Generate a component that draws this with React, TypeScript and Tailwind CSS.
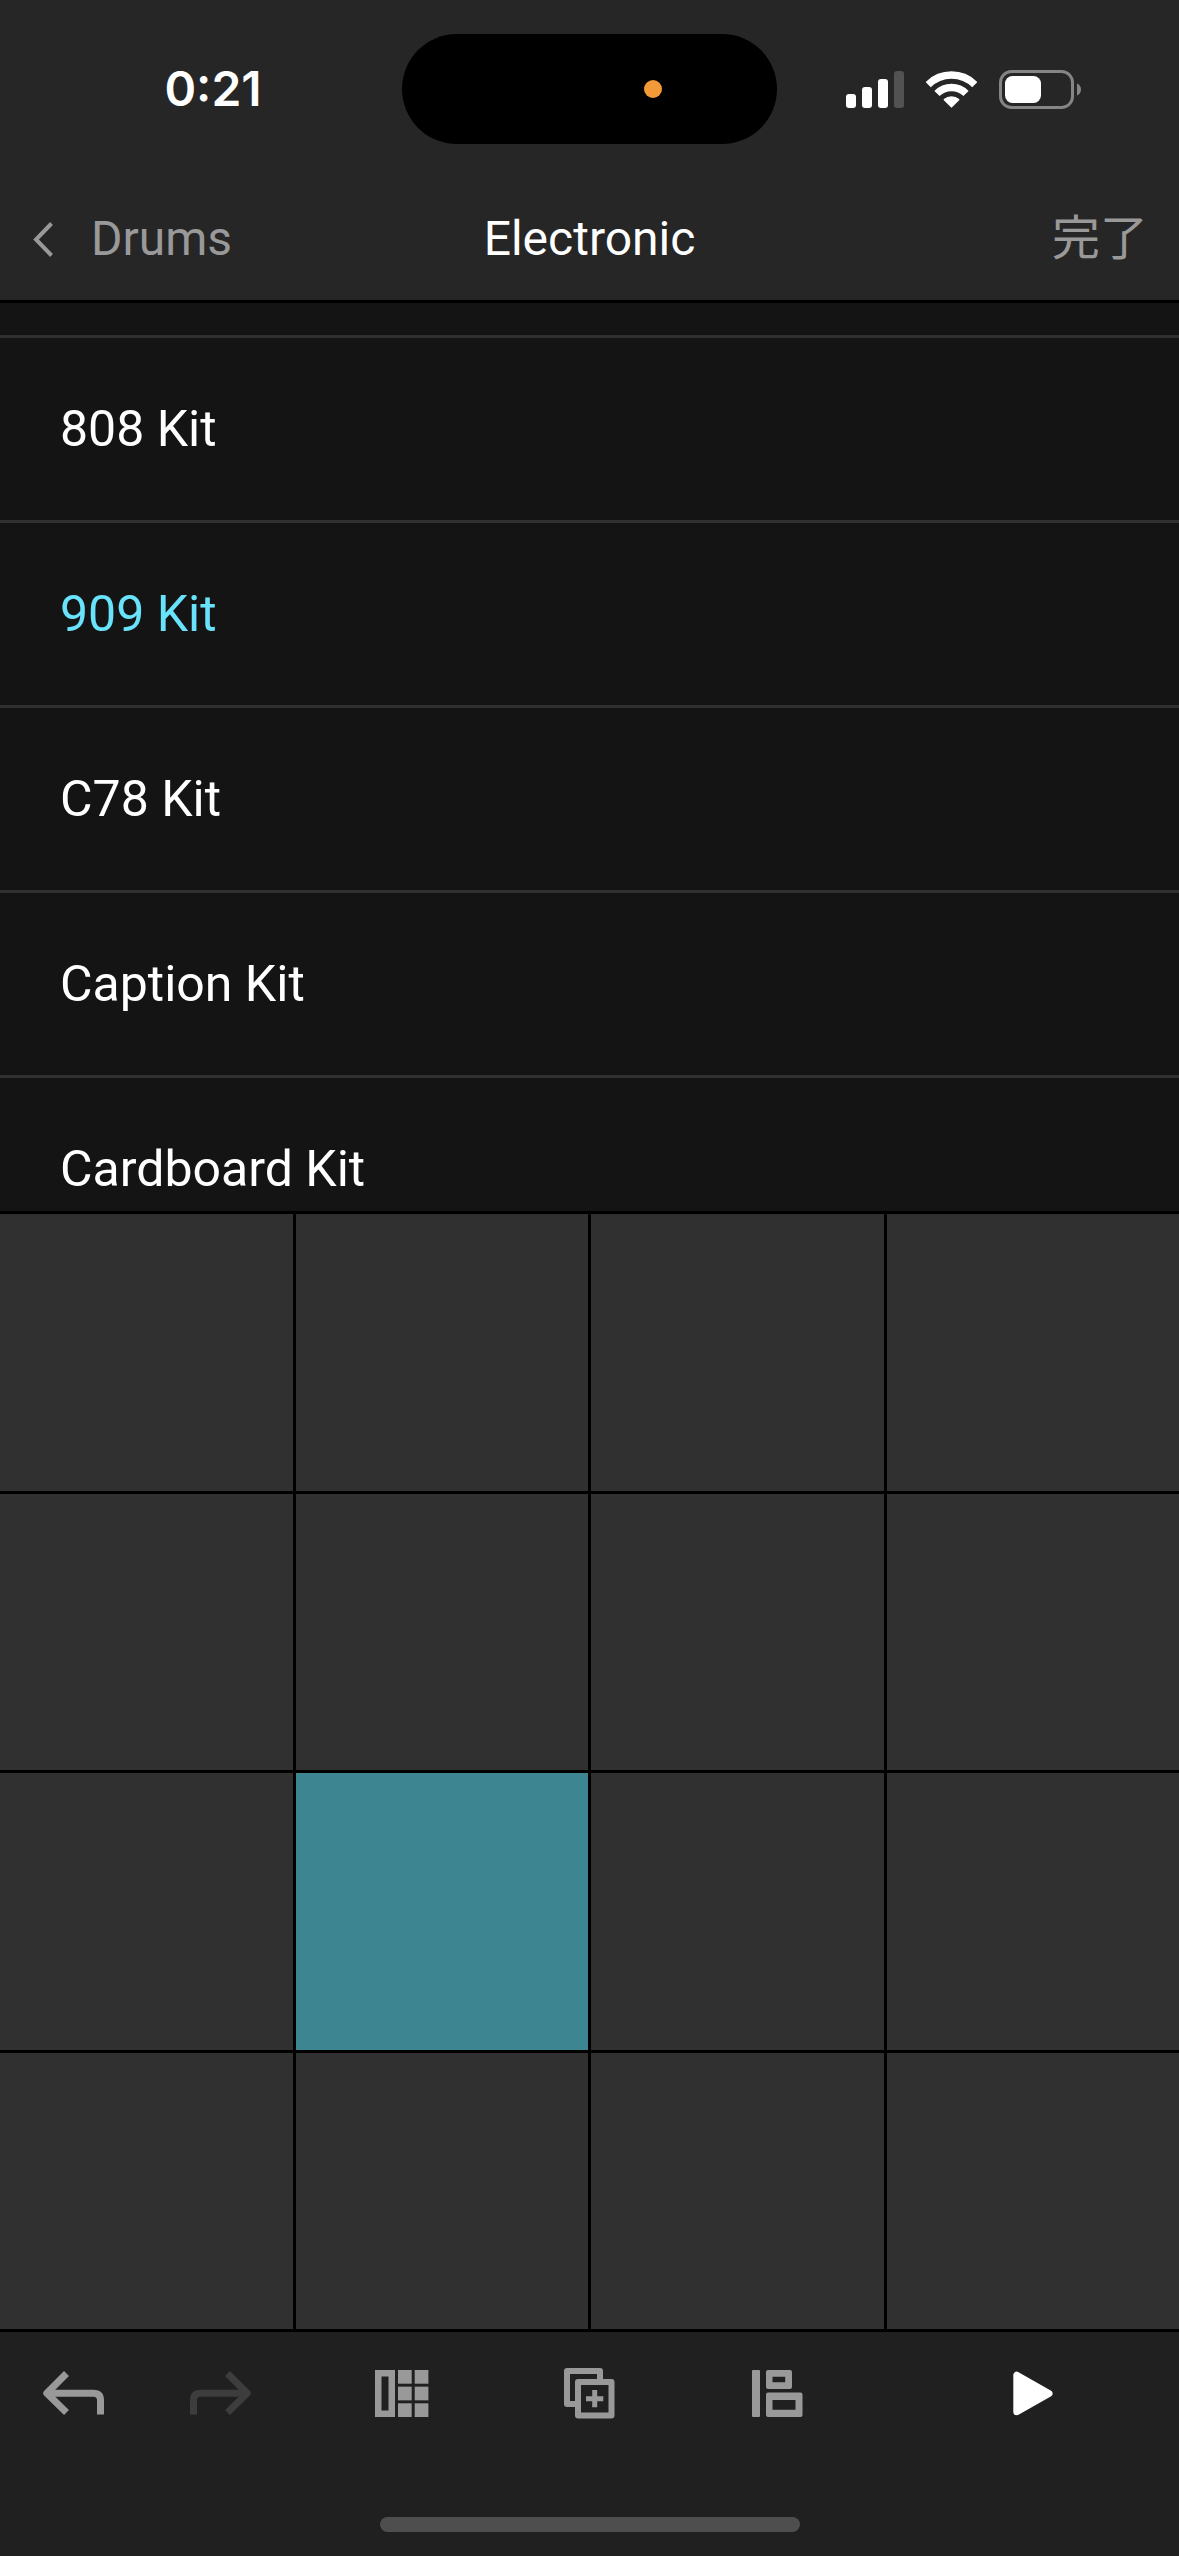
import { useState } from 'react';
import type { ReactNode } from 'react';
import clsx from 'clsx';

const kits = ['808 Kit', '909 Kit', 'C78 Kit', 'Caption Kit', 'Cardboard Kit'];
const pads = Array.from({ length: 16 }, (_, i) => i);

function StatusBar() {
  return (
    <div className="grid grid-cols-[1fr_375px_1fr] items-center h-[178px]">
      <div className="pl-6 text-center font-['Inter',sans-serif] text-5xl font-semibold text-white">
        0:21
      </div>

      <div className="flex items-center justify-end h-[110px] pr-[115px] rounded-full bg-black">
        <span className="size-[18px] rounded-full bg-[#f19a37]" />
      </div>

      <div className="flex items-center justify-end gap-[22px] pr-[98px]">
        {/* Signal */}
        <svg className="w-[58px] h-[37px]" viewBox="0 0 58 37" fill="#fff" aria-hidden="true">
          <rect x="0" y="23" width="10" height="14" rx="3" />
          <rect x="16" y="16" width="10" height="21" rx="3" />
          <rect x="32" y="8" width="10" height="29" rx="3" />
          <rect x="48" y="0" width="10" height="37" rx="3" fill="#525252" />
        </svg>
        {/* Wi-Fi */}
        <svg className="w-[51px] h-[37px]" viewBox="0 0 51 37" fill="none" stroke="#fff" strokeWidth="7.4" aria-hidden="true">
          <path d="M2.2 13.7A33 33 0 0 1 48.8 13.7" />
          <path d="M11 22.5A20.5 20.5 0 0 1 40 22.5" />
          <path
            d="M25.5 35.8L18.4 28.7A10.7 10.7 0 0 1 32.6 28.7Z"
            fill="#fff"
            strokeWidth="1.6"
            strokeLinejoin="round"
          />
        </svg>
        {/* Battery */}
        <svg className="w-[82px] h-[39px]" viewBox="0 0 82 39" fill="none" aria-hidden="true">
          <rect x="1.5" y="1.5" width="72" height="36" rx="11" stroke="#858585" strokeWidth="3" />
          <rect x="6" y="6" width="36" height="27" rx="7.5" fill="#fff" />
          <path d="M78 13.5C80.7 14.6 82 16.8 82 19.5S80.7 24.4 78 25.5Z" fill="#858585" />
        </svg>
      </div>
    </div>
  );
}

function NavBar() {
  return (
    <nav className="grid grid-cols-[1fr_auto_1fr] items-center h-[122px] text-5xl">
      <button className="flex items-center gap-[38px] pl-[33px] text-[#999]">
        <svg className="w-5 h-[35px]" viewBox="0 0 20 35" fill="none" stroke="currentColor" strokeWidth="4" aria-hidden="true">
          <path d="M18.5 1.5L3 17.5L18.5 33.5" />
        </svg>
        Drums
      </button>
      <h1 className="text-white">Electronic</h1>
      <button className="justify-self-end pr-[31px] font-['Roboto','Noto_Sans_CJK_JP',sans-serif] text-[#999]">
        完了
      </button>
    </nav>
  );
}

function UndoIcon({ className }: { className?: string }) {
  return (
    <svg className={clsx('w-[61px] h-11', className)} viewBox="0 0 61 44" fill="none" stroke="currentColor" strokeWidth="7" aria-hidden="true">
      <path d="M23.5 2.5L3.8 22.3L23.5 41.5" strokeLinejoin="round" />
      <path d="M6 22.3H50.5Q57.5 22.3 57.5 29.3V43.5" />
    </svg>
  );
}

function PadsIcon() {
  return (
    <svg className="w-[54px] h-[47px]" viewBox="0 0 54 47" fill="currentColor" aria-hidden="true">
      <path fillRule="evenodd" d="M0 0H20V47H0ZM6.5 6.5V40.5H13.5V6.5Z" />
      {[0, 16.65, 33.3].map((y) => (
        <g key={y}>
          <rect x="23" y={y} width="13.7" height="13.7" />
          <rect x="39.7" y={y} width="13.7" height="13.7" />
        </g>
      ))}
    </svg>
  );
}

function DuplicateIcon() {
  return (
    <svg className="size-[51px]" viewBox="0 0 51 51" fill="none" stroke="currentColor" strokeWidth="6" strokeLinejoin="round" aria-hidden="true">
      <path d="M14 36H3V3H36V14" />
      <rect x="14" y="14" width="33.5" height="33.5" />
      <path d="M22 30.7H39.3M30.7 22V39.3" strokeWidth="5" />
    </svg>
  );
}

function MixerIcon() {
  return (
    <svg className="w-[51px] h-[47px]" viewBox="0 0 51 47" fill="currentColor" aria-hidden="true">
      <rect width="8" height="47" rx="1" />
      <path
        fillRule="evenodd"
        d="M16 0H38Q40 0 40 2V17Q40 19 38 19H16Q14 19 14 17V2Q14 0 16 0ZM20.5 6.7V12.2H33.2V6.7Z"
      />
      <path
        fillRule="evenodd"
        d="M16 22.5H48.5Q50.5 22.5 50.5 24.5V45Q50.5 47 48.5 47H16Q14 47 14 45V24.5Q14 22.5 16 22.5ZM20.5 30V39.7H43.5V30Z"
      />
    </svg>
  );
}

function PlayIcon() {
  return (
    <svg className="w-10 h-[45px]" viewBox="0 0 40 45" fill="currentColor" stroke="currentColor" strokeWidth="7" strokeLinejoin="round" aria-hidden="true">
      <path d="M3.8 4.2V40.8L36 22.5Z" />
    </svg>
  );
}

function ToolButton({ label, className, disabled, children }: { label: string; className: string; disabled?: boolean; children: ReactNode }) {
  return (
    <button aria-label={label} disabled={disabled} className={clsx('flex items-center justify-center h-full', className)}>
      {children}
    </button>
  );
}

export default function App() {
  const [selected, setSelected] = useState('909 Kit');

  return (
    <div className="flex flex-col h-screen bg-black font-['Roboto',sans-serif]">
      <header className="bg-[#262626] border-b-3 border-black">
        <StatusBar />
        <NavBar />
      </header>

      {/* Kit list, starts with the tail end of the row above */}
      <ul className="flex-[908] min-h-0 overflow-y-auto [scrollbar-width:none] bg-[#141414]">
        <li className="h-8" aria-hidden="true" />
        {kits.map((kit) => (
          <li key={kit} className="border-t-3 border-[#303030]">
            <button
              aria-pressed={kit === selected}
              onClick={() => setSelected(kit)}
              className={clsx(
                'block w-full h-[182px] pl-[60px] text-left text-[50px]',
                kit === selected ? 'text-[#68e3fb]' : 'text-white'
              )}
            >
              {kit}
            </button>
          </li>
        ))}
      </ul>

      {/* Drum pads */}
      <div className="flex-[1115] min-h-0 grid grid-cols-4 grid-rows-4 gap-[3px] border-t-3 border-black">
        {pads.map((pad) => (
          <button
            key={pad}
            aria-label={`Pad ${pad + 1}`}
            className={pad === 9 ? 'bg-[#3d8590]' : 'bg-[#303030]'}
          />
        ))}
      </div>

      <footer className="border-t-3 border-black bg-[#202020]">
        <div className="grid grid-cols-[1fr_auto_1fr] h-[122px] text-[#999]">
          <div className="flex">
            <ToolButton label="Undo" className="w-[147px]">
              <UndoIcon />
            </ToolButton>
            <ToolButton label="Redo" className="w-[147px] text-[#3d3d3d]" disabled>
              <UndoIcon className="-scale-x-100" />
            </ToolButton>
          </div>
          <div className="flex">
            <ToolButton label="Pads" className="w-[188px]">
              <PadsIcon />
            </ToolButton>
            <ToolButton label="Duplicate" className="w-[188px]">
              <DuplicateIcon />
            </ToolButton>
            <ToolButton label="Mixer" className="w-[188px]">
              <MixerIcon />
            </ToolButton>
          </div>
          <ToolButton label="Play" className="w-[292px] justify-self-end text-white">
            <PlayIcon />
          </ToolButton>
        </div>
        <div className="w-[420px] h-[15px] mt-[63px] mb-6 mx-auto rounded-full bg-[#4e4e4e]" />
      </footer>
    </div>
  );
}
